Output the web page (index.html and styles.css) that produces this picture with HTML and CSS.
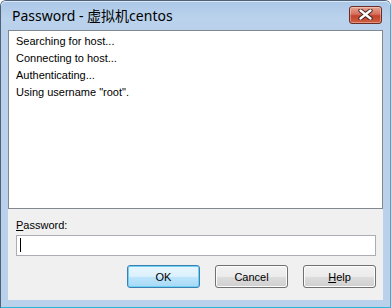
FILE: index.html
```html
<!DOCTYPE html>
<html lang="en">
<head>
    <meta charset="UTF-8">
    <title>Password - 虚拟机centos</title>
    <link rel="stylesheet" href="styles.css">
</head>
<body>
    <div class="window">
        <div class="titlebar">
            <span class="title">Password - 虚拟机centos</span>
            <div class="close-btn">
                <svg width="17" height="11" viewBox="0 0 17 11">
                    <path d="M3.5 1.5 L13.5 9.5 M13.5 1.5 L3.5 9.5" stroke="#3a1d18" stroke-width="4.2" stroke-linecap="round"/>
                    <path d="M3.5 1.5 L13.5 9.5 M13.5 1.5 L3.5 9.5" stroke="#ffffff" stroke-width="2.4" stroke-linecap="round"/>
                </svg>
            </div>
        </div>
        <div class="client">
            <div class="log">
                <div class="log-line">Searching for host...</div>
                <div class="log-line">Connecting to host...</div>
                <div class="log-line">Authenticating...</div>
                <div class="log-line">Using username "root".</div>
            </div>
            <div class="form">
                <label class="field-label"><u>P</u>assword:</label>
                <div class="pw-input"><span class="caret"></span></div>
                <div class="buttons">
                    <div class="btn default">OK</div>
                    <div class="btn">Cancel</div>
                    <div class="btn"><u>H</u>elp</div>
                </div>
            </div>
        </div>
    </div>
</body>
</html>
```

FILE: styles.css
```css
body {
    margin: 0;
    padding: 0;
    background: #ffffff;
    font-family: "Liberation Sans", Arial, "Noto Sans CJK SC", sans-serif;
    font-size: 11px;
    color: #000;
}
.window {
    width: 391px;
    height: 308px;
    box-sizing: border-box;
    display: flex;
    flex-direction: column;
    background: #b9d1ea;
    border-top: 1px solid #4e6179;
    border-left: 1px solid #4e6179;
    border-right: 1px solid #2cb5d8;
    border-bottom: 1px solid #2cb5d8;
    border-radius: 6px 6px 0 0;
    padding: 0 7px 7px 7px;
}
.titlebar {
    height: 29px;
    display: flex;
    align-items: center;
    margin: 0 -7px;
    padding-right: 8px;
    padding-left: 11px;
    background: linear-gradient(#abc7e7, #bad2eb 60%, #b9d1ea);
    border-radius: 5px 5px 0 0;
    box-shadow: inset 0 1px 0 #dbe8f6;
}
.title {
    font-family: "Noto Sans", "Noto Sans CJK SC", sans-serif;
    font-size: 14px;
    color: #000;
    margin-top: -1px;
}
.close-btn {
    margin-left: auto;
    width: 31px;
    height: 16px;
    margin-top: -2px;
    border: 1px solid #6b2a22;
    border-radius: 3px;
    background: linear-gradient(#e5a394, #d66f5b 45%, #c2432d 55%, #cf5f3f);
    display: flex;
    align-items: center;
    justify-content: center;
    box-shadow: inset 0 0 0 1px rgba(255, 255, 255, 0.35);
}
.client {
    flex: 1;
    background: #f0f0f0;
    display: flex;
    flex-direction: column;
}
.log {
    height: 179px;
    box-sizing: border-box;
    background: #fff;
    border: 1px solid #828790;
    padding: 2px 7px;
}
.log-line {
    line-height: 17px;
}
.form {
    padding: 9px 7px 0 8px;
}
.field-label {
    display: block;
    line-height: 14px;
    margin-bottom: 3px;
}
.pw-input {
    height: 21px;
    box-sizing: border-box;
    background: #fff;
    border: 1px solid #abadb3;
    padding: 2px 2px;
}
.caret {
    display: block;
    width: 1px;
    height: 14px;
    margin-left: 1px;
    background: #000;
}
.buttons {
    display: flex;
    justify-content: flex-end;
    gap: 15px;
    margin-top: 9px;
}
.btn {
    width: 73px;
    height: 23px;
    box-sizing: border-box;
    border: 1px solid #707070;
    border-radius: 3px;
    background: linear-gradient(#f2f2f2, #ebebeb 50%, #dddddd 51%, #cfcfcf);
    box-shadow: inset 0 0 0 1px #fcfcfc;
    display: flex;
    align-items: center;
    justify-content: center;
}
.btn.default {
    border-color: #3c7fb1;
    background: linear-gradient(#eaf6fd, #d9f0fc 50%, #bee6fd 51%, #a7d9f5);
    box-shadow: inset 0 0 0 1px #6fd1f5;
}
```
